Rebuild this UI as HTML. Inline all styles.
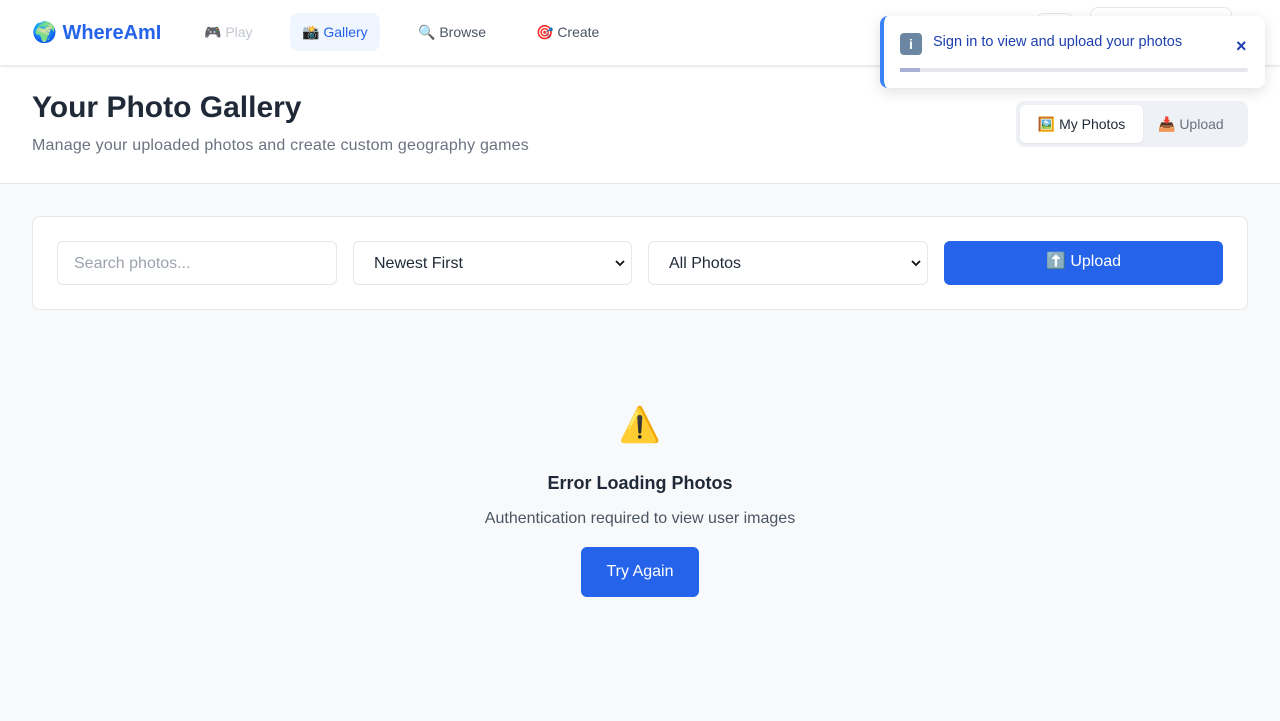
<!DOCTYPE html>
<html><head><meta charset="utf-8"><style>
*{box-sizing:border-box;margin:0;padding:0}
body{width:1280px;height:721px;overflow:hidden;background:#f8f9fb;font-family:"Liberation Sans",sans-serif;color:#1f2937;position:relative}
.nav{height:65px;background:#fff;box-shadow:0 1px 3px rgba(0,0,0,.15);position:relative;z-index:2}
.logo{position:absolute;left:32px;top:20px;font-size:20px;font-weight:bold;color:#2563eb}
.nl{position:absolute;top:13px;height:38px;line-height:38px;font-size:14px;color:#4b5563;padding:0 12px;border-radius:8px}
.hdr{background:#fff;height:119px;border-bottom:1px solid #e5e7eb;position:relative}
h1{position:absolute;left:32px;top:26px;font-size:30px;font-weight:bold;color:#1f2937}
.sub{position:absolute;left:32px;top:137px;font-size:16px;color:#6b7280;letter-spacing:.2px}
.tabs{position:absolute;left:1016px;top:101px;width:232px;height:46px;background:#eef1f6;border-radius:8px}
.tab1{position:absolute;left:4px;top:4px;width:123px;height:38px;background:#fff;border-radius:6px;font-size:14px;line-height:38px;text-align:center;color:#1f2937;box-shadow:0 1px 2px rgba(0,0,0,.06)}
.tab2{position:absolute;left:142px;top:4px;line-height:38px;font-size:14px;color:#6b7280}
.card{position:absolute;left:32px;top:216px;width:1216px;height:94px;background:#fff;border:1px solid #e5e7eb;border-radius:8px}
.in{position:absolute;top:24px;height:44px;border:1px solid #e5e7eb;border-radius:6px;font-size:16px;line-height:44px;padding-left:20px;background:#fff}
.in svg{position:absolute;right:6px;top:17px}
.btn{position:absolute;left:911px;top:24px;width:279px;height:44px;background:#2563eb;border-radius:6px;color:#fff;font-size:16px;text-align:center;line-height:42px}
.toast{position:absolute;left:880px;top:16px;width:385px;height:72px;background:#fff;border-left:4px solid #3b82f6;border-radius:8px;box-shadow:0 4px 14px rgba(0,0,0,.12);z-index:3}
</style></head><body>
<div class="nav">
<div class="logo">🌍 WhereAmI</div>
<div class="nl" style="left:192px;color:#c2c7cf">🎮 Play</div>
<div class="nl" style="left:290px;background:#eff6ff;color:#2563eb">📸 Gallery</div>
<div class="nl" style="left:406px">🔍 Browse</div>
<div class="nl" style="left:524px">🎯 Create</div>
<div style="position:absolute;left:1036px;top:13px;width:38px;height:38px;border:1px solid #e5e7eb;border-radius:8px"></div>
<div style="position:absolute;left:1090px;top:7px;width:142px;height:40px;border:1px solid #e5e7eb;border-radius:8px"></div>
</div>
<div class="hdr"><h1>Your Photo Gallery</h1></div>
<div class="sub">Manage your uploaded photos and create custom geography games</div>
<div class="tabs"><div class="tab1">🖼️ My Photos</div><div class="tab2">📥 Upload</div></div>
<div class="card">
<div class="in" style="left:24px;width:280px;color:#9ca3af;padding-left:16px">Search photos...</div>
<div class="in" style="left:320px;width:279px;color:#1f2937">Newest First<svg width="10" height="8" viewBox="0 0 10 8"><path d="M1 2l4 4 4-4" fill="none" stroke="#111" stroke-width="1.8"/></svg></div>
<div class="in" style="left:615px;width:280px;color:#1f2937">All Photos<svg width="10" height="8" viewBox="0 0 10 8"><path d="M1 2l4 4 4-4" fill="none" stroke="#111" stroke-width="1.8"/></svg></div>
<div class="btn">⬆️ Upload</div>
</div>
<div style="position:absolute;left:0;width:1280px;top:405px;text-align:center">
<div style="font-size:34px;height:40px">⚠️</div>
<div style="font-size:18px;font-weight:bold;margin-top:28px">Error Loading Photos</div>
<div style="font-size:16px;color:#4b5563;margin-top:16px">Authentication required to view user images</div>
</div>
<div style="position:absolute;left:581px;top:547px;width:118px;height:50px;background:#2563eb;border-radius:6px;color:#fff;font-size:16px;line-height:50px;text-align:center">Try Again</div>
<div class="toast">
<div style="position:absolute;left:16px;top:17px;width:22px;height:22px;background:#6b86a3;border-radius:4px;color:#fff;text-align:center;font-weight:bold;line-height:22px;font-size:14px">i</div>
<div style="position:absolute;left:49px;top:18px;font-size:14.5px;color:#1e40af">Sign in to view and upload your photos</div>
<div style="position:absolute;left:352px;top:20px;font-size:18px;color:#1e40af;font-weight:bold">×</div>
<div style="position:absolute;left:16px;top:52px;width:348px;height:4px;background:#e5e7eb;border-radius:2px"><div style="width:20px;height:4px;background:#a5b0d4"></div></div>
</div>
</body></html>
